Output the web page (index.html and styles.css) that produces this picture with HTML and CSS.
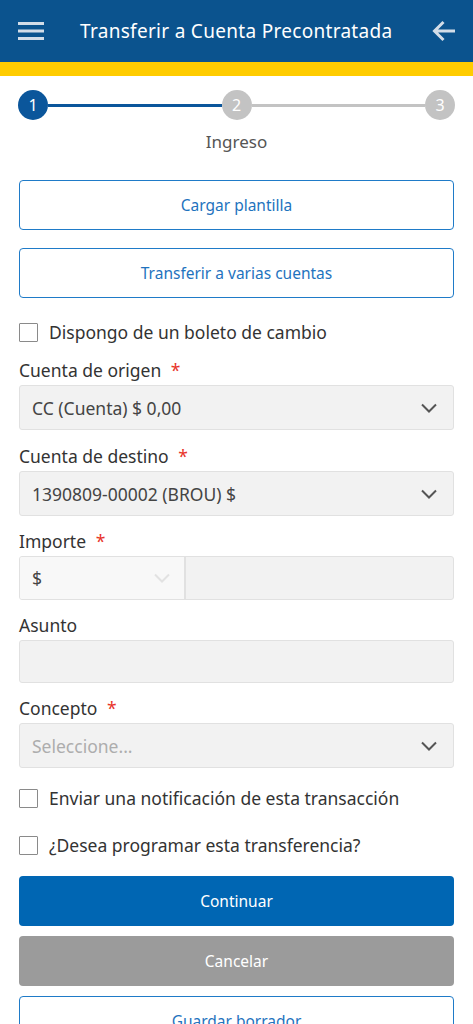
FILE: index.html
```html
<!DOCTYPE html>
<html lang="es">
<head>
<meta charset="utf-8">
<link rel="stylesheet" href="styles.css">
</head>
<body>
<header class="topbar">
  <svg class="icon-menu" width="26" height="20" viewBox="0 0 26 20"><path d="M0 2.5H26M0 10H26M0 17.5H26" stroke="#d3dde8" stroke-width="3"/></svg>
  <h1 class="title">Transferir a Cuenta Precontratada</h1>
  <svg class="icon-back" width="24" height="22" viewBox="0 0 24 22"><path d="M23 11H2.5M11.5 2L2.5 11L11.5 20" stroke="#d3dde8" stroke-width="3" fill="none"/></svg>
</header>
<div class="stripe"></div>
<main class="content">
  <div class="stepper">
    <span class="step active">1</span>
    <span class="bar active"></span>
    <span class="step">2</span>
    <span class="bar"></span>
    <span class="step">3</span>
  </div>
  <div class="step-label">Ingreso</div>

  <button class="btn outline first-btn">Cargar plantilla</button>
  <button class="btn outline">Transferir a varias cuentas</button>

  <label class="check first"><span class="box"></span>Dispongo de un boleto de cambio</label>

  <div class="field f-origen">
    <div class="label">Cuenta de origen <span class="req">*</span></div>
    <div class="select">CC (Cuenta) $ 0,00<svg class="chev" width="16" height="10" viewBox="0 0 16 10"><path d="M1 1.5L8 8.5L15 1.5" stroke="#555" stroke-width="2" fill="none"/></svg></div>
  </div>
  <div class="field f-destino">
    <div class="label">Cuenta de destino <span class="req">*</span></div>
    <div class="select">1390809-00002 (BROU) $<svg class="chev" width="16" height="10" viewBox="0 0 16 10"><path d="M1 1.5L8 8.5L15 1.5" stroke="#555" stroke-width="2" fill="none"/></svg></div>
  </div>
  <div class="field">
    <div class="label">Importe <span class="req">*</span></div>
    <div class="amount">
      <div class="currency">$<svg class="chev" width="16" height="10" viewBox="0 0 16 10"><path d="M1 1.5L8 8.5L15 1.5" stroke="#e2e2e2" stroke-width="2" fill="none"/></svg></div>
      <div class="amount-input"></div>
    </div>
  </div>
  <div class="field">
    <div class="label">Asunto</div>
    <div class="input"></div>
  </div>
  <div class="field">
    <div class="label">Concepto <span class="req">*</span></div>
    <div class="select placeholder">Seleccione...<svg class="chev" width="16" height="10" viewBox="0 0 16 10"><path d="M1 1.5L8 8.5L15 1.5" stroke="#555" stroke-width="2" fill="none"/></svg></div>
  </div>

  <label class="check notify"><span class="box"></span>Enviar una notificación de esta transacción</label>
  <label class="check second"><span class="box"></span>¿Desea programar esta transferencia?</label>

  <button class="btn primary">Continuar</button>
  <button class="btn grey">Cancelar</button>
  <button class="btn outline last">Guardar borrador</button>
</main>
</body>
</html>
```

FILE: styles.css
```css
* { box-sizing: border-box; }
html, body { margin: 0; padding: 0; background: #fff; }
body {
  font-family: "Noto Sans", "DejaVu Sans", sans-serif;
  color: #333;
  width: 473px;
  height: 1024px;
  overflow: hidden;
}
.topbar {
  height: 62px;
  background: #0b538e;
  display: flex;
  align-items: center;
  padding: 0 17px 0 18px;
}
.icon-menu { flex: none; }
.icon-back { flex: none; margin-left: auto; }
.title {
  margin: 0 0 0 36px;
  font-size: 19px;
  letter-spacing: 0.3px;
  font-weight: 400;
  color: #fff;
  white-space: nowrap;
}
.stripe { height: 14px; background: #ffcc00; }
.content { padding: 14px 19px 0 19px; }
.stepper {
  display: flex;
  align-items: center;
  margin-left: -1px;
  margin-right: -1px;
}
.step {
  width: 30px; height: 30px;
  border-radius: 50%;
  background: #c3c3c3;
  color: #fff;
  font-size: 16px;
  display: flex; align-items: center; justify-content: center;
  flex: none;
}
.step.active { background: #0b569b; }
.bar { flex: 1; height: 3px; background: #c3c3c3; }
.bar.active { background: #0b569b; }
.step-label {
  text-align: center;
  font-size: 17px;
  color: #555;
  margin-top: 10px;
  height: 24px;
  line-height: 24px;
}
.btn {
  display: flex;
  align-items: center;
  justify-content: center;
  width: 100%;
  height: 50px;
  border-radius: 4px;
  font-family: inherit;
  font-size: 15.5px;
  padding: 0;
  cursor: pointer;
}
.btn.outline { background: #fff; border: 1.5px solid #1f7bc8; color: #1f73be; margin-top: 18px; }
.btn.outline.first-btn { margin-top: 26px; }
.btn.primary { background: #0066b3; border: none; color: #fff; margin-top: 19px; }
.btn.grey { background: #9b9b9b; border: none; color: #fff; margin-top: 10px; }
.btn.outline.last { margin-top: 10px; }
.check {
  display: flex;
  align-items: center;
  font-size: 17.5px;
  color: #333;
  height: 24px;
  line-height: 24px;
}
.check.first { margin-top: 22px; }
.check.notify { margin-top: 18px; }
.check.second { margin-top: 23px; }
.box {
  width: 19px; height: 19px;
  border: 1.5px solid #8a8a8a;
  border-radius: 1px;
  margin-right: 11px;
  flex: none;
}
.field { margin-top: 14px; }
.field.f-origen { margin-top: 15px; }
.field.f-destino { margin-top: 15px; }
.label {
  font-size: 17.5px;
  color: #333;
  height: 22px;
  line-height: 22px;
  margin-bottom: 4px;
}
.req { color: #e8342a; margin-left: 5px; }
.select, .input, .amount {
  height: 45px;
  background: #f2f2f2;
  border: 1px solid #e1e1e1;
  border-radius: 3px;
}
.select {
  display: flex;
  align-items: center;
  padding: 0 16px 0 12px;
  font-size: 17.5px;
  color: #444;
}
.select.placeholder { color: #adadad; }
.chev { margin-left: auto; flex: none; }
.amount { height: 44px; display: flex; overflow: hidden; }
.input { height: 43px; }
.currency {
  width: 166px;
  background: #f8f8f8;
  border-right: 2px solid #e1e1e1;
  display: flex;
  align-items: center;
  padding: 0 14px 0 12px;
  font-size: 17.5px;
  color: #444;
}
.amount-input { flex: 1; }
```
